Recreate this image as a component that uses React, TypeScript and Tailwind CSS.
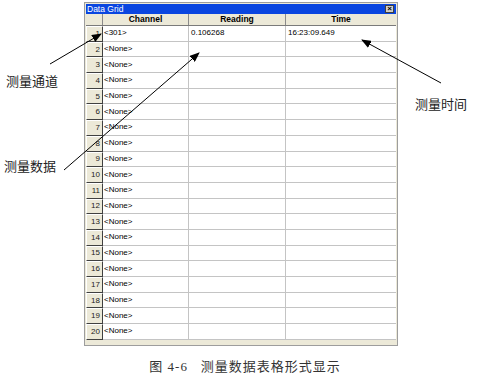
import React from "react";

const rows = Array.from({ length: 20 }, (_, i) => ({
    id: i + 1,
    channel: i === 0 ? "<301>" : "<None>",
    reading: i === 0 ? "0.106268" : "",
    time: i === 0 ? "16:23:09.649" : "",
}));

const serif = { fontFamily: '"Liberation Serif", "Noto Sans CJK SC", serif' };

const Arrows = () => (
    <svg className="absolute left-0 top-0 pointer-events-none" width="490" height="375" viewBox="0 0 490 375">
        <defs>
            <marker id="head" markerWidth="10" markerHeight="8" refX="9" refY="4" orient="auto" markerUnits="userSpaceOnUse">
                <path d="M0,0 L10,4 L0,8 Z" fill="#000" />
            </marker>
        </defs>
        <line x1="50" y1="64" x2="101" y2="34" stroke="#000" strokeWidth="1" markerEnd="url(#head)" />
        <line x1="64" y1="170" x2="199" y2="53" stroke="#000" strokeWidth="1" markerEnd="url(#head)" />
        <line x1="441" y1="83" x2="362" y2="40" stroke="#000" strokeWidth="1" markerEnd="url(#head)" />
    </svg>
);

const App = () => {
    return (
        <main
            className="relative w-[490px] h-[375px] bg-white overflow-hidden"
            style={{ fontFamily: '"Liberation Sans", Arial, sans-serif' }}
        >
            <div className="pl-[84px] pt-[2px]">
                <div className="w-[314px] border border-[#9d9d9d] bg-[#ece9d8] p-[1px]">
                    {/* title bar */}
                    <div className="flex items-center justify-between h-[10px] bg-[#0a46e0] pl-[1px] pr-[2px]">
                        <span className="text-white text-[8.5px] leading-none">Data Grid</span>
                        <span className="flex items-center justify-center w-[9px] h-[8px] bg-[#d4d0c8] border border-[#404040] text-[8px] leading-none font-bold text-black">
                            ×
                        </span>
                    </div>
                    {/* header */}
                    <div className="flex h-[12px] text-[8.5px] font-bold text-black bg-[#ece9d8] border-b border-[#7a7a7a]">
                        <div className="w-[17px] border-r border-[#8a8a8a]" />
                        <div className="w-[86px] flex items-center justify-center border-r border-[#8a8a8a]">Channel</div>
                        <div className="w-[97px] flex items-center justify-center border-r border-[#8a8a8a]">Reading</div>
                        <div className="flex-1 flex items-center justify-center">Time</div>
                    </div>
                    {/* rows */}
                    <div className="bg-white">
                        {rows.map((row) => (
                            <div key={row.id} className="flex h-[15.7px] text-[8px] text-black">
                                <div className="w-[17px] flex items-center justify-end pr-[2px] bg-[#ece9d8] border-t border-l border-white border-r border-r-[#404040] border-b border-b-[#404040] text-[#222]">
                                    {row.id}
                                </div>
                                <div className="w-[86px] flex items-center pl-[1px] border-r border-b border-[#c4c4c4]">{row.channel}</div>
                                <div className="w-[97px] flex items-center pl-[2px] border-r border-b border-[#c4c4c4]">{row.reading}</div>
                                <div className="flex-1 flex items-center pl-[2px] border-b border-[#c4c4c4]">{row.time}</div>
                            </div>
                        ))}
                    </div>
                    <div className="h-[4px] bg-[#ece9d8]" />
                </div>
            </div>

            <p className="text-center text-[13px] text-[#333] mt-[11px] tracking-[1px]" style={serif}>
                图 4-6&nbsp;&nbsp;&nbsp;测量数据表格形式显示
            </p>

            <span className="absolute left-[6px] top-[72px] text-[13px] text-[#222]" style={serif}>
                测量通道
            </span>
            <span className="absolute left-[4px] top-[157px] text-[13px] text-[#222]" style={serif}>
                测量数据
            </span>
            <span className="absolute left-[415px] top-[95px] text-[13px] text-[#222]" style={serif}>
                测量时间
            </span>

            <Arrows />
        </main>
    );
};

export default App;
